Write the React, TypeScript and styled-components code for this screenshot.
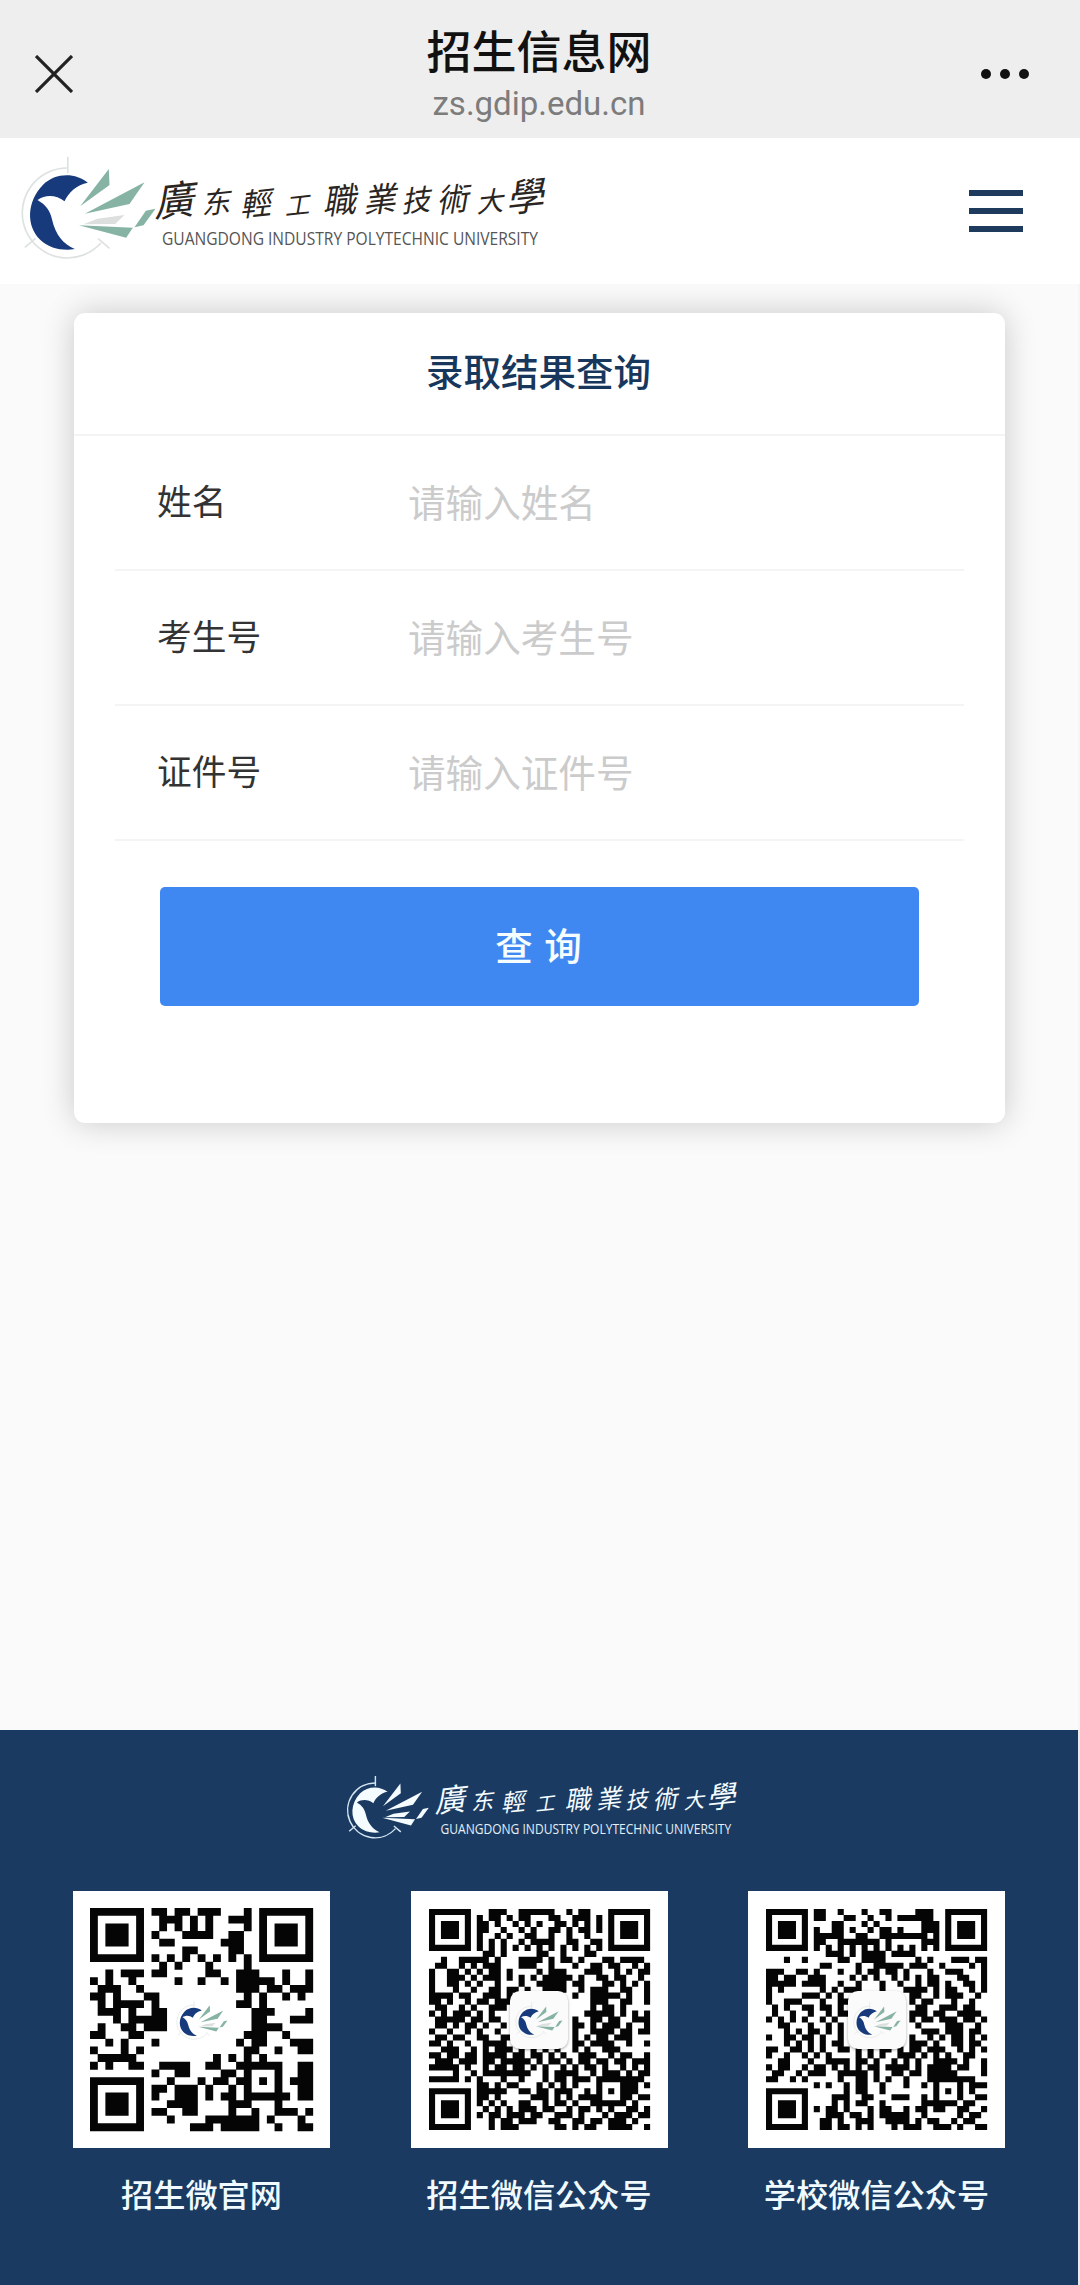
import React, { useState } from 'react';
import styled, { createGlobalStyle } from 'styled-components';

const colors = {
  navy: '#1a3a62',
  title: '#17375c',
  primary: '#4088f1',
  text: '#333',
  placeholder: '#cbcbcb',
  line: '#f4f4f4',
};

const QR_SITE = [
  '#######.##.##.###...#.#######',
  '#.....#..###.#.#..###.#.....#',
  '#.###.#..#.#.#.#....#.#.###.#',
  '#.###.#.#...####..##..#.###.#',
  '#.###.#..##......###..#.###.#',
  '#.....#.....##....##..#.....#',
  '#######.#.#.#.#.#.#.#.#######',
  '.........#.#...#....#........',
  '..#.###.##.....##..###...#..#',
  '#.#..#.....#..#..#.#####.#..#',
  '.###..#............###.##.###',
  '##.#...##...........#.#..#.#.',
  '.#.####.#..........##.#......',
  '.###.#..##...........###....#',
  '...#.#####...........##...###',
  '.#..##.###...........####....',
  '##...##.............###..#...',
  '..#.#...#..........#.##...###',
  '#...#.#.............##..#..##',
  '.#####..........#.#.#.#......',
  '#.#..##..####..##..######..##',
  '........#..##....##.#...#..##',
  '#######...#...#.##.##.#.#.###',
  '#.....#.##.###.#..#.#...#..##',
  '#.###.#.#..###.#.##.######.##',
  '#.###.#...####....###...#....',
  '#.###.#.##..##....#..#..###.#',
  '#.....#...#....#######.#...#.',
  '#######......###.#####..#..##',
];

const QR_ADMISSION = [
  '#######...###..######..#.##...#######',
  '#.....#.#.##.#.##...##..###.#.#.....#',
  '#.###.#.##.#..#.#.#..##.#.#.#.#.###.#',
  '#.###.#.##..#..#.#..##.#.##.#.#.###.#',
  '#.###.#.#..#.#..##..#..#..#...#.###.#',
  '#.....#.#.#.#..#.####..##..##.#.....#',
  '#######.#.#.#.#.#.#.#.#.#.#.#.#######',
  '.........##.#.....##..#...##.........',
  '..#..#####.#...####.#.##.#...##.####.',
  '.##..#.#.###...###..#...#..##.##..#.#',
  '#..##.#.#.##.#....#.###...###..#.#.##',
  '#..###.#.###.#.#.#.#####.#..##.##..#.#',
  '#..##.#.#..#...#..#####.##...##.#.#.#',
  '#...#..#..##.##.#..####..#.###..##..#',
  '####.##..###.#..........#..#####.#..#',
  '##.#..#.##.###.............###..##..#',
  '.##..#.#..###..............#.##.#....',
  '#.#.###.#.#...............#####.#.#.#',
  '.#####.##.##............#..##.##..###',
  '.##.#.##.#..#...........##.#.###.#..#',
  '#..#..#.#..#............#..####.##.##',
  '.##.##..##..##..........#.#.##.###...',
  '##.#..#..####...........##.####..#..#',
  '..###..#.#.###.#.#.#.#..#.#..###.....',
  '##.##.##.####.##.##.#.#..###..#.##..#',
  '.###.###.##.#####.#.##.#.##.##.##.###',
  '#####.#..#.##.##.#.#..#.#.##.#..#.#.#',
  '....#..#.########..#.####..#.###.#.##',
  '#####.#.#...#..#...#.##.###.########.',
  '........##.#.##...#.#.#.#...#...###.#',
  '#######.#####..##.##.###..#.#.#.###..',
  '#.....#.##.#.....###.#.#.####...##.##',
  '#.###.#.#.#.#..##..#.##.#..######.#..',
  '#.###.#..#.#.#.###.##..#.##.#.#..##.#',
  '#.###.#.#.##.###.##..###.#...#.###.##',
  '#.....#...#.##.###..##..##.##.###.#..',
  '#######...#.###......##.#.##..####..#',
];

const QR_SCHOOL = [
  '#######.##..#...#..##....###..#######',
  '#.....#.##...##..#..#.######..#.....#',
  '#.###.#....##...#.#.......###.#.###.#',
  '#.###.#.#..##.#..#.##.#...###.#.###.#',
  '#.###.#.#####..##..########.#.#.###.#',
  '#.....#.##..#######.#.....###.#.....#',
  '#######.#.#.#.#.#.#.#.#.#.#.#.#######',
  '..........###.#.####.####............',
  '...#..#.....##..####.....#.#...###.##',
  '.........##....#..#####.###..#....#.#',
  '###..##.#...#..#.##.##.#...#..###...#',
  '##.##..###....#.#.#..#.#.#.##...##..#',
  '#####.####..#..#...#..#..#.##.#..##.#',
  '#.#......#.#.###...#...####.#.##..#.#',
  '#.....###.#.#...........##..#.###..#.',
  '#..###...#..##..........#.##...#..#..',
  '.#.#..##.##.#............##..###.##..',
  '.#..#..#..#.##..........###.##..####.',
  '#.#.#.#..#.#............#.##.###.##.#',
  '..##...#..#.#............#....###..#.',
  '...#.#.##.#.#.............###.###.##.',
  '#..##.##.#..#...........#..#.#.##.#.#',
  '...#.#.#.#.##...........###.#..##.##.',
  '##..##.#.#..##.#.#.##.#.##.###..#.#.#',
  '#..#..#.#.#....#.#.#..###.#.#.#..##..',
  '..##...#..####.##.#..#.#.#..####.#..#',
  '#.##..#.##.#.#.#.##.####.#.####.##..#',
  '.##..#.###..#####.#..##.##.#####....#',
  '##..#.#.....#..##.#.#..#...########..',
  '........#.#..#.##..#...#..#.#...#.###',
  '#######......#.##..#........#.#.#.#..',
  '#.....#....###..##...###..#.#...#..##',
  '#.###.#....#.#.##..#......######.##..',
  '#.###.#.#.##.#...#.##..#.##.##..##..#',
  '#.###.#...###.##.#.#####..#.....#.##.',
  '#.....#..##.#..###..####.#.##..#.##..',
  '#######..##.##.#.#...#.###..###.#..##',
];

const fields = [
  { name: 'name', label: '姓名', placeholder: '请输入姓名' },
  { name: 'examNo', label: '考生号', placeholder: '请输入考生号' },
  { name: 'idNo', label: '证件号', placeholder: '请输入证件号' },
];

const qrCodes = [
  { label: '招生微官网', rows: QR_SITE, boxed: false },
  { label: '招生微信公众号', rows: QR_ADMISSION, boxed: true },
  { label: '学校微信公众号', rows: QR_SCHOOL, boxed: true },
];

// [character, centre x, centre y, size]
const calligraphy: [string, number, number, number][] = [
  ['廣', 22, 35, 40],
  ['东', 63, 37, 29],
  ['輕', 103, 38, 31],
  ['工', 144, 40, 25],
  ['職', 187, 35, 34],
  ['業', 227, 34, 33],
  ['技', 263, 35, 29],
  ['術', 300, 34, 32],
  ['大', 337, 36, 27],
  ['學', 373, 31, 38],
];

type LogoProps = {
  light?: boolean;
};

const Emblem = ({ light }: LogoProps) => {
  const ring = light ? '#d5e6f2' : '#dde2e0';
  const disc = light ? '#f4fcff' : '#173a7c';
  const wing = light ? '#f4fcff' : '#86b3a3';

  return (
    <Drawing viewBox="60 45 410 315">
      <g fill="none" stroke={ring} strokeWidth={light ? 7 : 5}>
        <path d="M203 50V100" />
        <path d="M203 84A135 135 0 1 0 302 309" />
        <path d="M74 322L106 295M294 296L328 325" />
      </g>
      <path
        fill={disc}
        d="M263 128C226 98 166 97 128 135C80 185 77 257 120 299C148 326 190 333 224 327C190 313 166 284 156 240C150 211 137 195 112 180C136 163 168 164 193 184C204 158 230 134 263 128Z"
      />
      <g fill={wing}>
        <path d="M240 199L326 87L328 135Z" />
        <path d="M254 221L433 127L388 192Z" />
        <path d="M236 256L398 263L378 293Z" />
        <path d="M403 262L437 212L466 206L430 256Z" />
      </g>
      <path fill={light ? '#f4fcff' : '#dcdfde'} d="M250 253L292 236L373 225L345 252Z" />
    </Drawing>
  );
};

const Wordmark = ({ light }: LogoProps) => (
  <Drawing viewBox="-5 -12 403 110">
    <g fill={light ? '#f4fcff' : '#2b2522'} fontFamily='"Noto Sans CJK TC", sans-serif' textAnchor="middle">
      {calligraphy.map(([char, x, y, size]) => (
        <text key={char} fontSize={size} transform={`translate(${x} ${y}) rotate(-6) skewX(-16)`} y={size * 0.37}>
          {char}
        </text>
      ))}
    </g>
    <text
      x="7"
      y="80"
      fontSize="18"
      textLength="376"
      lengthAdjust="spacingAndGlyphs"
      fill={light ? '#e3f0f8' : '#555'}
      fontFamily='"Open Sans", sans-serif'
    >
      GUANGDONG INDUSTRY POLYTECHNIC UNIVERSITY
    </text>
  </Drawing>
);

const toPath = (rows: string[]) =>
  rows
    .map((row, y) => [...row].map((cell, x) => (cell === '#' && x < rows.length ? `M${x} ${y}h1.02v1.02h-1.02z` : '')).join(''))
    .join('');

const App = () => {
  const [values, setValues] = useState<Record<string, string>>({});

  const handleChange = (e: React.ChangeEvent<HTMLInputElement>) => {
    setValues({ ...values, [e.target.name]: e.target.value });
  };

  return (
    <>
      <GlobalStyle />
      <Page>
        <TitleBar>
          <BarIcon>
            <svg width="38" height="38" viewBox="0 0 38 38" stroke="#222" strokeWidth="3.2">
              <path d="M1 1L37 37M37 1L1 37" />
            </svg>
          </BarIcon>
          <TitleGroup>
            <PageTitle>招生信息网</PageTitle>
            <PageUrl>zs.gdip.edu.cn</PageUrl>
          </TitleGroup>
          <BarIcon>
            <svg width="50" height="12" viewBox="0 0 50 12" fill="#111">
              <circle cx="6" cy="6" r="5" />
              <circle cx="25" cy="6" r="5" />
              <circle cx="44" cy="6" r="5" />
            </svg>
          </BarIcon>
        </TitleBar>

        <SiteHeader>
          <Logo>
            <EmblemBox><Emblem /></EmblemBox>
            <WordmarkBox><Wordmark /></WordmarkBox>
          </Logo>
          <MenuButton aria-label="menu">
            <MenuLine />
            <MenuLine />
            <MenuLine />
          </MenuButton>
        </SiteHeader>

        <Main>
          <Card>
            <CardTitle>录取结果查询</CardTitle>
            <Form onSubmit={(e) => e.preventDefault()}>
              {fields.map((field) => (
                <Field key={field.name}>
                  <Label htmlFor={field.name}>{field.label}</Label>
                  <Input
                    id={field.name}
                    name={field.name}
                    placeholder={field.placeholder}
                    value={values[field.name] || ''}
                    onChange={handleChange}
                  />
                </Field>
              ))}
              <SubmitButton type="submit">查 询</SubmitButton>
            </Form>
          </Card>
        </Main>

        <Footer>
          <Logo $indent={10}>
            <EmblemBox $small><Emblem light /></EmblemBox>
            <WordmarkBox $small><Wordmark light /></WordmarkBox>
          </Logo>
          <QrList>
            {qrCodes.map(({ label, rows, boxed }) => (
              <QrItem key={label}>
                <QrImage $inset={boxed ? 18 : 17}>
                  <Drawing viewBox={`0 0 ${rows.length} ${rows.length}`}>
                    <path d={toPath(rows)} fill="#050505" />
                  </Drawing>
                  <QrBadge $boxed={boxed}><Emblem /></QrBadge>
                </QrImage>
                <QrLabel>{label}</QrLabel>
              </QrItem>
            ))}
          </QrList>
        </Footer>
      </Page>
    </>
  );
};

const GlobalStyle = createGlobalStyle`
  * {
    box-sizing: border-box;
  }
  body {
    margin: 0;
    background: #fafafa;
    font-family: "Noto Sans CJK SC", sans-serif;
  }
`;

const Drawing = styled.svg`
  display: block;
  width: 100%;
  height: 100%;
  overflow: visible;
`;

const Page = styled.div`
  display: flex;
  flex-direction: column;
  width: 1080px;
  height: 2285px;
  overflow: hidden;
`;

const TitleBar = styled.header`
  display: flex;
  align-items: center;
  justify-content: space-between;
  height: 138px;
  padding: 9px 50px 0 35px;
  background: #eee;
`;

const BarIcon = styled.div`
  display: flex;
  width: 50px;
`;

const TitleGroup = styled.div`
  display: flex;
  flex-direction: column;
  align-items: center;
  margin: -1px 0 0 13px;
`;

const PageTitle = styled.h1`
  margin: 0;
  font-size: 45px;
  line-height: 60px;
  font-weight: 500;
  color: #111;
`;

const PageUrl = styled.span`
  margin-top: 2px;
  font-family: Roboto, sans-serif;
  font-size: 33px;
  line-height: 44px;
  color: #7c7c7c;
`;

const SiteHeader = styled.div`
  display: flex;
  align-items: flex-start;
  justify-content: space-between;
  height: 146px;
  padding: 17px 57px 0 20px;
  background: #fff;
`;

const Logo = styled.div<{ $indent?: number }>`
  display: flex;
  align-items: flex-start;
  padding-left: ${({ $indent = 0 }) => $indent}px;
`;

const EmblemBox = styled.div<{ $small?: boolean }>`
  width: ${({ $small }) => ($small ? 84 : 137)}px;
  height: ${({ $small }) => ($small ? 64 : 105)}px;
  margin-top: ${({ $small }) => ($small ? 12 : 0)}px;
`;

const WordmarkBox = styled.div<{ $small?: boolean }>`
  width: ${({ $small }) => ($small ? 312 : 403)}px;
  height: ${({ $small }) => ($small ? 85 : 110)}px;
  margin: ${({ $small }) => ($small ? '0 0 0 1px' : '-2px 0 0 -7px')};
`;

const MenuButton = styled.button`
  display: flex;
  flex-direction: column;
  gap: 12px;
  margin-top: 35px;
  padding: 0;
  border: 0;
  background: none;
`;

const MenuLine = styled.span`
  width: 54px;
  height: 6px;
  background: #1e3a5c;
`;

const Main = styled.main`
  height: 1446px;
  padding: 29px 73px 0 74px;
  border-right: 2px solid #f5f5f5;
  background: #fafafa;
`;

const Card = styled.section`
  height: 810px;
  border-radius: 11px;
  background: #fff;
  box-shadow: 0 0 32px rgba(0, 0, 0, 0.2);
`;

const CardTitle = styled.h2`
  display: flex;
  align-items: center;
  justify-content: center;
  height: 123px;
  margin: 0;
  padding: 0 2px 8px 0;
  border-bottom: 2px solid ${colors.line};
  font-size: 37.5px;
  font-weight: 500;
  color: ${colors.title};
`;

const Form = styled.form`
  display: flex;
  flex-direction: column;
  padding: 0 41px;
`;

const Field = styled.div`
  display: flex;
  align-items: center;
  height: 135px;
  padding: 0 0 5px 42px;
  border-bottom: 2px solid ${colors.line};
`;

const Label = styled.label`
  width: 251px;
  font-size: 34.7px;
  color: ${colors.text};
`;

const Input = styled.input`
  flex: 1;
  min-width: 0;
  padding: 0;
  border: 0;
  outline: 0;
  background: none;
  font-family: inherit;
  font-size: 37.6px;
  color: ${colors.text};
  &::placeholder {
    color: ${colors.placeholder};
    opacity: 1;
  }
`;

const SubmitButton = styled.button`
  height: 119px;
  margin: 46px 45px 0;
  padding: 0 2px 6px 0;
  border: 0;
  border-radius: 5px;
  background: ${colors.primary};
  font-family: inherit;
  font-size: 37.5px;
  font-weight: 500;
  word-spacing: 3px;
  color: #f5fdff;
`;

const Footer = styled.footer`
  display: flex;
  flex-direction: column;
  align-items: center;
  height: 555px;
  padding-top: 33px;
  border-right: 2px solid #e8ecf0;
  background: ${colors.navy};
`;

const QrList = styled.div`
  display: flex;
  justify-content: space-between;
  width: 932px;
  margin-top: 43px;
`;

const QrItem = styled.div`
  display: flex;
  flex-direction: column;
  align-items: center;
  width: 257px;
`;

const QrImage = styled.div<{ $inset: number }>`
  position: relative;
  width: 257px;
  height: 257px;
  padding: ${({ $inset }) => $inset}px;
  background: #fff;
`;

const QrBadge = styled.div<{ $boxed: boolean }>`
  position: absolute;
  top: 50%;
  left: 50%;
  display: flex;
  width: 58px;
  height: 58px;
  padding: ${({ $boxed }) => ($boxed ? 5 : 3)}px;
  border-radius: 10px;
  background: ${({ $boxed }) => ($boxed ? '#fbfbfb' : '#fff')};
  box-shadow: ${({ $boxed }) => ($boxed ? '0 1px 3px rgba(0, 0, 0, 0.35)' : 'none')};
  transform: translate(-50%, -50%);
`;

const QrLabel = styled.span`
  margin-top: 21px;
  font-size: 32.2px;
  line-height: 48px;
  font-weight: 500;
  white-space: nowrap;
  color: #f0faff;
`;

export default App;
